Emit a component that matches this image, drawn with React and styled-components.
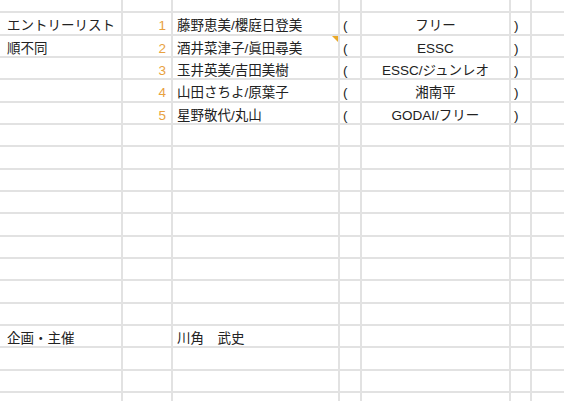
import React from "react";
import styled, { createGlobalStyle } from "styled-components";

const Global = createGlobalStyle`
  html, body { margin: 0; padding: 0; background: #ffffff; }
  body { width: 564px; height: 401px; overflow: hidden; }
`;

const ROW_H = 20.33;

const Sheet = styled.div`
  display: grid;
  grid-template-columns: 1px 118px 48px 165px 20px 147px 19px 1fr;
  grid-template-rows: 2.3px 7px repeat(18, ${ROW_H}px);
  gap: 2px;
  background: #e2e2e2;
  width: 564px;
  height: 401px;
  overflow: hidden;
  font-family: "Liberation Sans", "Noto Sans CJK JP", sans-serif;
  font-size: 13.5px;
  color: #222222;
`;

const Cell = styled.div`
  position: relative;
  display: flex;
  align-items: center;
  justify-content: ${(p) =>
    p.$align === "right" ? "flex-end" : p.$align === "center" ? "center" : "flex-start"};
  padding: 6px ${(p) => (p.$align === "right" ? "5px" : "0")} 0
    ${(p) => (p.$align === "left" ? "4px" : p.$align === "bracket" ? "3px" : "0")};
  background: #ffffff;
  color: ${(p) => (p.$tone === "number" ? "#e8a13e" : "#222222")};
  line-height: 16px;
  white-space: nowrap;
  overflow: visible;
  min-width: 0;
`;

const CommentMark = styled.span`
  position: absolute;
  top: 0;
  right: 0;
  width: 0;
  height: 0;
  border-top: 6px solid #eaa928;
  border-left: 6px solid transparent;
`;

const entries = [
  { label: "エントリーリスト", no: "1", name: "藤野恵美/櫻庭日登美", club: "フリー" },
  { label: "順不同", no: "2", name: "酒井菜津子/眞田尋美", club: "ESSC", comment: true },
  { label: "", no: "3", name: "玉井英美/吉田美樹", club: "ESSC/ジュンレオ" },
  { label: "", no: "4", name: "山田さちよ/原葉子", club: "湘南平" },
  { label: "", no: "5", name: "星野敬代/丸山", club: "GODAI/フリー" },
];

function buildRows() {
  const rows = [];
  rows.push(null, null);
  entries.forEach((e) => rows.push(e));
  for (let i = 5; i < 18; i++) {
    if (i === 14) rows.push({ label: "企画・主催", no: "", name: "川角　武史", club: "", plain: true });
    else rows.push(null);
  }
  return rows;
}

function Row({ data }) {
  if (!data) {
    return Array.from({ length: 8 }, (_, i) => <Cell key={i} $align="left" />);
  }
  const bracket = !data.plain;
  return (
    <>
      <Cell $align="left" />
      <Cell $align="left">{data.label}</Cell>
      <Cell $align="right" $tone="number">{data.no}</Cell>
      <Cell $align="left">
        {data.name}
        {data.comment && <CommentMark />}
      </Cell>
      <Cell $align="bracket">{bracket ? "(" : ""}</Cell>
      <Cell $align="center">{data.club}</Cell>
      <Cell $align="bracket">{bracket ? ")" : ""}</Cell>
      <Cell $align="left" />
    </>
  );
}

export default function App() {
  const rows = buildRows();
  return (
    <>
      <Global />
      <Sheet>
        {rows.map((r, i) => (
          <Row key={i} data={r} />
        ))}
      </Sheet>
    </>
  );
}
